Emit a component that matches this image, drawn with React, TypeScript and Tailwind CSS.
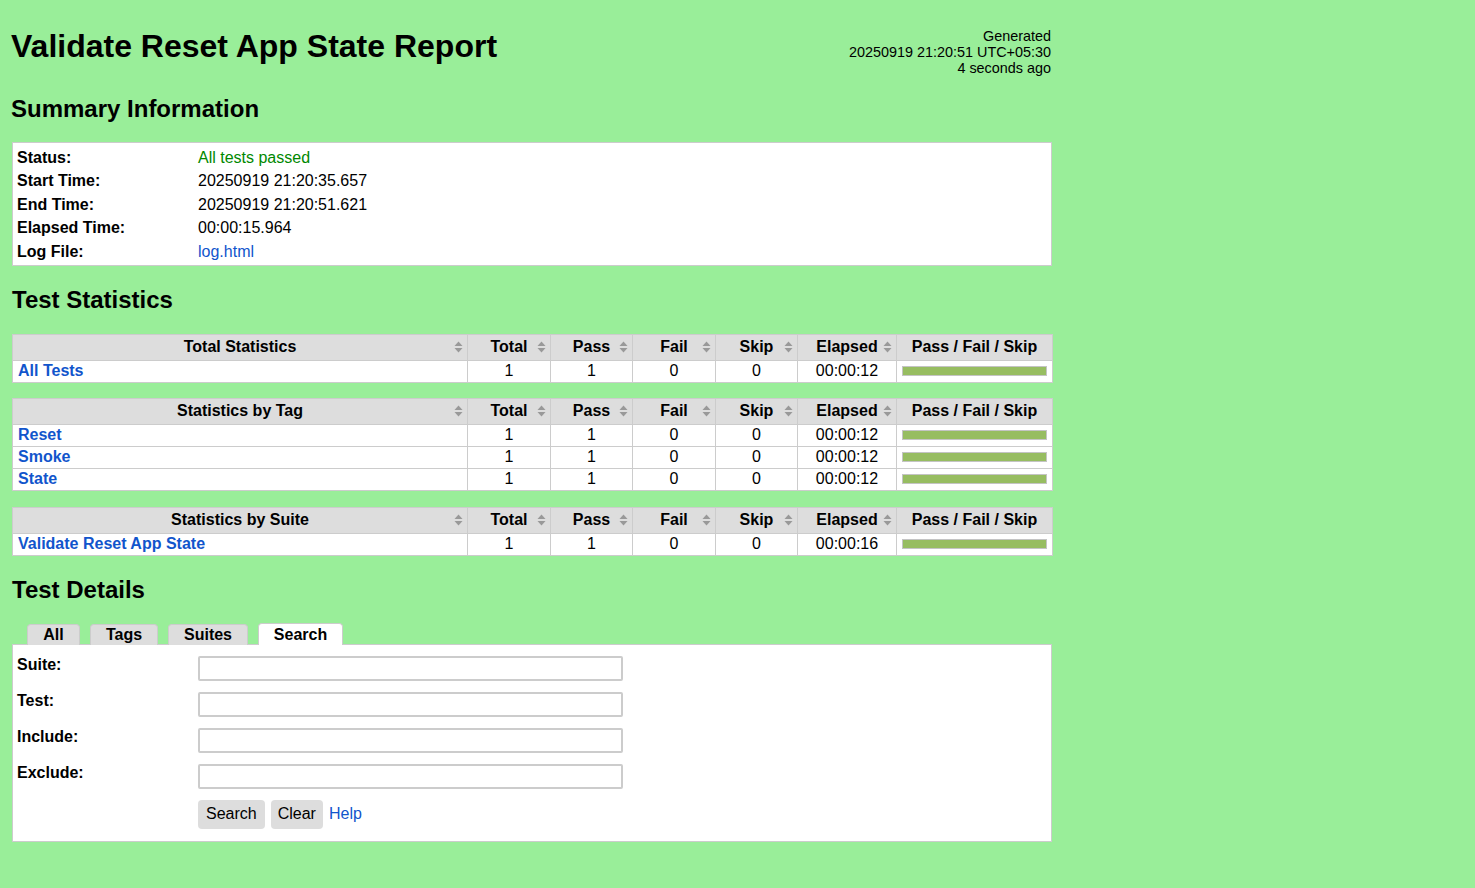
import type { ReactNode } from "react";

// Robot Framework style report page (passed run → green background)

const FONT = "font-['Liberation_Sans',Arial,Helvetica,sans-serif]";

type Row = { name: string; total: number; pass: number; fail: number; skip: number; elapsed: string };

const SortIcon = () => (
  <svg viewBox="0 0 9 12" className="absolute right-[4px] top-1/2 h-[12px] w-[9px] -translate-y-1/2" aria-hidden="true">
    <path d="M4.5 0.5L8.5 5H0.5Z" fill="#999999" />
    <path d="M4.5 11.5L0.5 7H8.5Z" fill="#999999" />
  </svg>
);

function Th({ children, sort = true }: { children: ReactNode; sort?: boolean }) {
  return (
    <th className="relative h-[26px] border border-[#cccccc] bg-[#dddddd] p-0 text-center text-[16px] font-bold leading-[18px] text-black">
      {children}
      {sort && <SortIcon />}
    </th>
  );
}

function StatTable({ title, rows, className = "" }: { title: string; rows: Row[]; className?: string }) {
  return (
    <table className={`w-[1040px] table-fixed border-collapse border border-[#cccccc] bg-white ${className}`}>
      <colgroup>
        <col className="w-[455px]" />
        <col className="w-[83px]" />
        <col className="w-[82px]" />
        <col className="w-[83px]" />
        <col className="w-[82px]" />
        <col className="w-[99px]" />
        <col className="w-[156px]" />
      </colgroup>
      <thead>
        <tr>
          <Th>{title}</Th>
          <Th>Total</Th>
          <Th>Pass</Th>
          <Th>Fail</Th>
          <Th>Skip</Th>
          <Th>Elapsed</Th>
          <Th sort={false}>Pass / Fail / Skip</Th>
        </tr>
      </thead>
      <tbody>
        {rows.map((r) => (
          <tr key={r.name} className="text-[16px] leading-[18px]">
            <td className="h-[22px] border border-[#cccccc] px-[5px] py-0 font-bold">
              <a href="#" className="text-[#1155cc] no-underline">{r.name}</a>
            </td>
            <td className="border border-[#cccccc] p-0 text-center">{r.total}</td>
            <td className="border border-[#cccccc] p-0 text-center">{r.pass}</td>
            <td className="border border-[#cccccc] p-0 text-center">{r.fail}</td>
            <td className="border border-[#cccccc] p-0 text-center">{r.skip}</td>
            <td className="border border-[#cccccc] p-0 text-center">{r.elapsed}</td>
            <td className="border border-[#cccccc] px-[5px] py-0">
              <div className="h-[10px] w-full border border-[#c4c4c4] bg-[#97bd61]" />
            </td>
          </tr>
        ))}
      </tbody>
    </table>
  );
}

const summary: [string, ReactNode][] = [
  ["Status:", <span className="text-[#008800]">All tests passed</span>],
  ["Start Time:", "20250919 21:20:35.657"],
  ["End Time:", "20250919 21:20:51.621"],
  ["Elapsed Time:", "00:00:15.964"],
  ["Log File:", <a href="#" className="text-[#1155cc] no-underline">log.html</a>],
];

const tabs: { label: string; w: string }[] = [
  { label: "All", w: "w-[53px]" },
  { label: "Tags", w: "w-[68px]" },
  { label: "Suites", w: "w-[80px]" },
];

const one = (name: string, elapsed = "00:00:12"): Row => ({ name, total: 1, pass: 1, fail: 0, skip: 0, elapsed });

export default function App() {
  return (
    <div className={`${FONT} min-h-screen bg-[#99ee99] px-[12px] pt-[28px] pb-[47px] text-black`}>
      <div className="w-[1040px]">
        {/* header */}
        <div className="flex items-start justify-between">
          <h1 className="-ml-[1px] text-[32px] font-bold leading-[37px]">Validate Reset App State Report</h1>
          <div className="mr-[1px] text-right text-[14.4px] leading-[16px]">
            <div>Generated</div>
            <div>20250919 21:20:51 UTC+05:30</div>
            <div>4 seconds ago</div>
          </div>
        </div>

        <h2 className="mt-[19px] -ml-[1px] text-[24px] font-bold leading-[28px]">Summary Information</h2>
        <div className="mt-[19px] border border-[#cccccc] bg-white pt-[3px] pb-[1px]">
          <table className="border-collapse text-[16px] leading-[18.5px]">
            <tbody>
              {summary.map(([k, v]) => (
                <tr key={k}>
                  <th className="w-[185px] py-[2.5px] pl-[4px] text-left font-bold">{k}</th>
                  <td className="py-[2.5px]">{v}</td>
                </tr>
              ))}
            </tbody>
          </table>
        </div>

        <h2 className="mt-[20px] text-[24px] font-bold leading-[28px]">Test Statistics</h2>
        <div className="mt-[20px] flex flex-col">
          <StatTable title="Total Statistics" rows={[one("All Tests")]} />
          <StatTable className="mt-[15px]" title="Statistics by Tag" rows={[one("Reset"), one("Smoke"), one("State")]} />
          <StatTable className="mt-[16px]" title="Statistics by Suite" rows={[one("Validate Reset App State", "00:00:16")]} />
        </div>

        <h2 className="mt-[20px] text-[24px] font-bold leading-[28px]">Test Details</h2>
        <div className="mt-[19px]">
          {/* tabs */}
          <div className="relative z-10 -mb-px flex items-end gap-[10px] pl-[15px] text-[16px] font-bold leading-[18px]">
            {tabs.map((t) => (
              <div key={t.label} className={`${t.w} rounded-t-[4px] border border-b-0 border-[#cccccc] bg-[#dddddd] py-[1px] text-center`}>
                {t.label}
              </div>
            ))}
            <div className="w-[85px] rounded-t-[4px] border border-b-0 border-[#cccccc] bg-white pt-[2px] pb-[1px] text-center">Search</div>
          </div>
          <div className="border border-[#cccccc] bg-white pt-[11px] pb-[12px] text-[16px] leading-[18px]">
            {["Suite:", "Test:", "Include:", "Exclude:"].map((l) => (
              <div key={l} className="mb-[11px] flex items-start">
                <label className="w-[185px] pl-[4px] font-bold">{l}</label>
                <input className="h-[25px] w-[425px] rounded-[2px] border-2 border-[#cccccc] bg-white px-1 outline-none" />
              </div>
            ))}
            <div className="flex items-center pl-[185px] pt-0">
              <button className="h-[29px] rounded-[4px] bg-[#dddddd] px-[8px] text-[16px]">Search</button>
              <button className="ml-[6px] h-[29px] rounded-[4px] bg-[#dddddd] px-[7px] text-[16px]">Clear</button>
              <a href="#" className="ml-[6px] text-[#1155cc] no-underline">Help</a>
            </div>
          </div>
        </div>
      </div>
    </div>
  );
}
